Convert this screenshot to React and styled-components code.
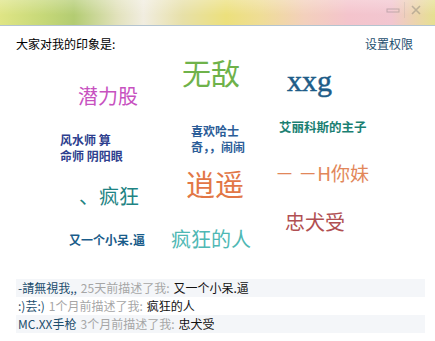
import styled, { createGlobalStyle } from 'styled-components'

const Global = createGlobalStyle`
  html, body { margin: 0; padding: 0; background: #fff; }
  body { font-family: "Noto Sans CJK SC", "Liberation Sans", sans-serif; }
`

const Win = styled.div`
  width: 435px;
  height: 341px;
  overflow: hidden;
  position: relative;
  background: #fff;
`

const TitleBar = styled.div`
  height: 25px;
  border-bottom: 1px solid #b4c4d0;
  background:
    linear-gradient(180deg, rgba(255,255,255,0.25), rgba(255,255,255,0) 60%),
    linear-gradient(90deg, #dfe585 0%, #c6d878 10%, #b3cc72 17%, #e2e2bc 27%, #f1ede0 33%, #e7e0a8 42%, #ece07c 52%, #efdd96 60%, #f3d0bc 70%, #f4c4cc 80%, #f2c6d0 90%, #e6e090 100%);
  display: flex;
  justify-content: flex-end;
  align-items: flex-start;
  padding-right: 8px;
`

const WinBtn = styled.div`
  width: 22px;
  height: 16px;
  display: flex;
  align-items: center;
  justify-content: center;
  opacity: 0.35;
  border-right: ${p => (p.sep ? '1px solid rgba(150,150,150,0.5)' : 'none')};
  margin-top: 2px;
`

const TopRow = styled.div`
  display: flex;
  justify-content: space-between;
  padding: 11px 22px 0 16px;
  height: 19px;
  font-size: 12px;
  line-height: 14px;
`

const Label = styled.span`
  color: #000;
`

const Link = styled.span`
  color: #1c4e6e;
`

const Cloud = styled.div`
  position: relative;
  height: 223px;
`

const Tag = styled.span`
  position: absolute;
  left: ${p => p.x}px;
  top: ${p => p.y}px;
  font-size: ${p => p.size}px;
  color: ${p => p.color};
  font-weight: ${p => (p.bold ? 700 : 400)};
  font-family: ${p => (p.serif ? '"Liberation Serif", serif' : '"Noto Sans CJK SC", sans-serif')};
  -webkit-text-stroke: ${p => (p.serif ? '0.5px' : '0')};
  line-height: ${p => p.lh || 1};
  white-space: nowrap;
`

const List = styled.div`
  padding: 0 10px 0 16px;
  display: flex;
  flex-direction: column;
`

const Row = styled.div`
  height: 18px;
  line-height: 18px;
  font-size: 12px;
  padding-left: 2px;
  background: ${p => (p.alt ? '#f4f6f9' : '#fff')};
  white-space: nowrap;
`

const Who = styled.span`
  color: #1b4d6c;
`

const When = styled.span`
  color: #a6a6a6;
  margin: 0 4px;
`

const What = styled.span`
  color: #111;
`

const tags = [
  { t: '无敌', x: 182, y: 2, size: 29, color: '#6fb24a' },
  { t: '潜力股', x: 78, y: 30, size: 20, color: '#c751bf' },
  { t: 'xxg', x: 287, y: 10, size: 30, color: '#1e5c88', serif: true },
  { t: '风水师 算\n命师 阴阳眼', x: 60, y: 76, size: 12, color: '#2d3e8e', bold: true, lh: 1.3 },
  { t: '喜欢哈士\n奇，，闹闹', x: 191, y: 67, size: 12, color: '#2b5d98', bold: true, lh: 1.3 },
  { t: '艾丽科斯的主子', x: 279, y: 65, size: 12.5, color: '#1a7f72', bold: true },
  { t: '逍遥', x: 186, y: 113, size: 29, color: '#e27746' },
  { t: '－ －H你妹', x: 275, y: 107, size: 19, color: '#e2875a' },
  { t: '、疯狂', x: 79, y: 130, size: 20, color: '#1f8484' },
  { t: '忠犬受', x: 285, y: 156, size: 20, color: '#b14f52' },
  { t: '又一个小呆.逼', x: 69, y: 178, size: 12, color: '#1a5c8a', bold: true },
  { t: '疯狂的人', x: 171, y: 173, size: 20, color: '#4fb8b4' },
]

const rows = [
  { who: '-請無視我,,', when: '25天前描述了我:', what: '又一个小呆.逼', alt: true },
  { who: ':)芸:)', when: '1个月前描述了我:', what: '疯狂的人' },
  { who: 'MC.XX手枪', when: '3个月前描述了我:', what: '忠犬受', alt: true },
]

export default function App() {
  return (
    <Win>
      <Global />
      <TitleBar>
        <WinBtn sep>
          <svg width="14" height="10" viewBox="0 0 14 10">
            <rect x="1" y="4" width="12" height="3" fill="none" stroke="#666" strokeWidth="1" />
          </svg>
        </WinBtn>
        <WinBtn>
          <svg width="12" height="12" viewBox="0 0 12 12">
            <path d="M2 2 L10 10 M10 2 L2 10" stroke="#666" strokeWidth="1.6" />
          </svg>
        </WinBtn>
      </TitleBar>
      <TopRow>
        <Label>大家对我的印象是:</Label>
        <Link>设置权限</Link>
      </TopRow>
      <Cloud>
        {tags.map((g, i) => (
          <Tag key={i} {...g}>
            {g.t.split('\n').map((line, j) => (
              <div key={j}>{line}</div>
            ))}
          </Tag>
        ))}
      </Cloud>
      <List>
        {rows.map((r, i) => (
          <Row key={i} alt={r.alt}>
            <Who>{r.who}</Who>
            <When>{r.when}</When>
            <What>{r.what}</What>
          </Row>
        ))}
      </List>
    </Win>
  )
}
